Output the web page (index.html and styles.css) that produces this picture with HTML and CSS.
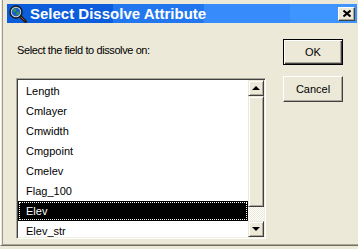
FILE: index.html
```html
<!DOCTYPE html>
<html lang="en">
<head>
  <meta charset="UTF-8">
  <meta name="viewport" content="width=device-width, initial-scale=1.0">
  <title>Select Dissolve Attribute</title>
  <link rel="stylesheet" href="styles.css">
</head>
<body>
  <div class="window">
    <!-- Title bar -->
    <div class="titlebar">
      <svg class="app-icon" width="18" height="18" viewBox="0 0 18 18">
        <line x1="11" y1="11" x2="16.5" y2="16.5" stroke="#2b1a0a" stroke-width="3" stroke-linecap="round"/>
        <line x1="11.5" y1="11.5" x2="15.5" y2="15.5" stroke="#8a5a2a" stroke-width="1"/>
        <circle cx="7" cy="7" r="6" fill="#c8d8e8" stroke="#1a1a1a" stroke-width="1.5"/>
        <circle cx="7" cy="7" r="4.3" fill="#1f5fc8"/>
        <path d="M4 5 L6 3.5 L7.5 4.5 L6.5 6.5 L4.5 7 Z" fill="#2fa040"/>
        <path d="M7.5 7.5 L10 6.5 L10.5 8.5 L8.5 10.5 L7.5 9.5 Z" fill="#2fa040"/>
      </svg>
      <span class="title">Select Dissolve Attribute</span>
      <button class="close">
        <svg width="8" height="7" viewBox="0 0 8 7">
          <path d="M0.5 0.5 L7.5 6.5 M7.5 0.5 L0.5 6.5" stroke="#000" stroke-width="2"/>
        </svg>
      </button>
    </div>

    <div class="content">
      <div class="main">
        <p class="prompt">Select the field to dissolve on:</p>
        <!-- Field list -->
        <div class="listbox">
          <ul class="items">
            <li>Length</li>
            <li>Cmlayer</li>
            <li>Cmwidth</li>
            <li>Cmgpoint</li>
            <li>Cmelev</li>
            <li>Flag_100</li>
            <li class="selected">Elev</li>
            <li>Elev_str</li>
          </ul>
          <div class="scrollbar">
            <div class="scroll-btn"><span class="arrow-up"></span></div>
            <div class="thumb"></div>
            <div class="track"></div>
            <div class="scroll-btn"><span class="arrow-down"></span></div>
          </div>
        </div>
      </div>

      <div class="actions">
        <button class="btn btn-default">OK</button>
        <button class="btn">Cancel</button>
      </div>
    </div>
  </div>
</body>
</html>
```

FILE: styles.css
```css
body {
  margin: 0;
  background-color: #ece9d8;
  font-family: 'Liberation Sans', Arial, sans-serif;
  font-size: 11px;
  color: #000;
  overflow: hidden;
}
.window {
  width: 358px;
  height: 246px;
  box-sizing: border-box;
  background-color: #ece9d8;
  border-left: 1px solid #fff;
  border-bottom: 1px solid #716f64;
  box-shadow: inset 1px 0 #ece9d8, inset 2px 0 #9d9a8c, inset 0 -1px #aca899;
  padding-top: 4px;
}
/* Title bar */
.titlebar {
  height: 19px;
  margin: 0 1px 0 6px;
  display: flex;
  align-items: center;
  background: linear-gradient(to right,
    #0b5ddc 0, #0b5ddc 106px,
    #2277ef 106px, #2277ef 197px,
    #378bfb 197px, #378bfb 283px,
    #3e95ff 283px);
}
.app-icon {
  margin-left: 2px;
  flex-shrink: 0;
}
.title {
  margin-left: 3px;
  color: #fff;
  font-weight: bold;
  font-size: 15px;
  line-height: 19px;
}
.close {
  margin-left: auto;
  margin-right: 2px;
  width: 17px;
  height: 14px;
  padding: 0;
  display: flex;
  align-items: center;
  justify-content: center;
  background-color: #ece9d8;
  border: 1px solid;
  border-color: #fff #404040 #404040 #fff;
  box-shadow: inset -1px -1px #aca899;
}
/* Content */
.content {
  display: flex;
  padding-left: 15px;
}
.main {
  width: 250px;
}
.prompt {
  margin: 21px 0 0 1px;
  line-height: 13px;
  letter-spacing: -0.4px;
}
/* List box */
.listbox {
  margin-top: 21px;
  height: 161px;
  box-sizing: border-box;
  display: flex;
  background-color: #fff;
  border: 1px solid;
  border-color: #aca899 #fff #fff #aca899;
  box-shadow: inset 1px 1px #404040, inset -1px -1px #f1efe2;
  padding: 1px;
}
.items {
  flex: 1;
  list-style: none;
  margin: 0;
  padding: 1px 0 0;
  overflow: hidden;
}
.items li {
  height: 20px;
  line-height: 20px;
  padding-left: 8px;
  white-space: nowrap;
}
.items li.selected {
  background-color: #000;
  color: #fff;
  outline: 1px dotted #fff;
  outline-offset: -2px;
}
/* Scroll bar */
.scrollbar {
  width: 16px;
  display: flex;
  flex-direction: column;
}
.scroll-btn, .thumb {
  box-sizing: border-box;
  background-color: #ece9d8;
  border: 1px solid;
  border-color: #ece9d8 #404040 #404040 #ece9d8;
  box-shadow: inset 1px 1px #fff, inset -1px -1px #aca899;
}
.scroll-btn {
  height: 16px;
  display: flex;
  align-items: center;
  justify-content: center;
}
.thumb {
  height: 111px;
}
.track {
  flex: 1;
  background: repeating-conic-gradient(#ece9d8 0 25%, #fff 0 50%) 0 0 / 2px 2px;
}
.arrow-up, .arrow-down {
  width: 0;
  height: 0;
  border-left: 4px solid transparent;
  border-right: 4px solid transparent;
}
.arrow-up {
  border-bottom: 4px solid #000;
}
.arrow-down {
  border-top: 4px solid #000;
}
/* Buttons */
.actions {
  margin-left: 17px;
  padding-top: 16px;
  display: flex;
  flex-direction: column;
  gap: 11px;
}
.btn {
  width: 60px;
  height: 26px;
  box-sizing: border-box;
  padding: 0;
  font-family: 'Liberation Sans', Arial, sans-serif;
  font-size: 11px;
  color: #000;
  background-color: #ece9d8;
  border: 1px solid;
  border-color: #fff #404040 #404040 #fff;
  box-shadow: inset -1px -1px #aca899;
}
.btn-default {
  border: 1px solid #000;
  box-shadow: inset 1px 1px #fff, inset -1px -1px #404040, inset -2px -2px #aca899;
}
```
